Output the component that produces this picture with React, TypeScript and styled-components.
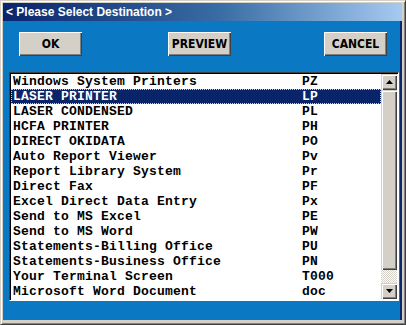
import React from "react";
import styled, { createGlobalStyle } from "styled-components";

const GlobalStyle = createGlobalStyle`
  html, body { margin: 0; padding: 0; background: #ffffff; }
  * { box-sizing: border-box; }
`;

const Window = styled.div`
  width: 406px;
  height: 325px;
  background: #d4d0c8;
  border-top: 1px solid #d4d0c8;
  border-left: 1px solid #d4d0c8;
  border-right: 1px solid #404040;
  border-bottom: 1px solid #404040;
  box-shadow: inset 1px 1px 0 #ffffff, inset -1px -1px 0 #808080;
  padding: 2px 3px 4px 2px;
  display: flex;
  flex-direction: column;
`;

const TitleBar = styled.div`
  height: 18px;
  flex: none;
  background: linear-gradient(to right, #0a246a 0%, #3a6ea5 55%, #a6caf0 100%);
  color: #ffffff;
  font-family: "Liberation Sans", Arial, sans-serif;
  font-weight: bold;
  font-size: 12px;
  line-height: 18px;
  padding-left: 3px;
  white-space: nowrap;
`;

const Body = styled.div`
  flex: 1;
  background: #0a78c2;
  border-right: 2px solid #0a2a6a;
  display: flex;
  flex-direction: column;
  padding: 11px 0 0 6px;
`;

const ButtonRow = styled.div`
  display: flex;
  padding-left: 10px;
  height: 24px;
`;

const Button = styled.button<{ $offset: number }>`
  margin-left: ${(p) => p.$offset}px;
  width: 63px;
  height: 24px;
  flex: none;
  padding: 0;
  background: #d4d0c8;
  border: none;
  box-shadow: inset 1px 1px 0 #ffffff, inset -1px -1px 0 #404040,
    inset -2px -2px 0 #808080;
  font-family: "DejaVu Sans Condensed", "Liberation Sans", sans-serif;
  font-weight: bold;
  font-size: 12px;
  color: #000000;
  cursor: default;
`;

const ListBox = styled.div`
  margin-top: 16px;
  width: 390px;
  height: 229px;
  background: #ffffff;
  border-top: 1px solid #404040;
  border-left: 1px solid #404040;
  border-right: 1px solid #ffffff;
  border-bottom: 1px solid #ffffff;
  box-shadow: inset 1px 1px 0 #000000;
  display: flex;
  padding: 1px;
`;

const Rows = styled.div`
  flex: 1;
`;

const Row = styled.div<{ $selected?: boolean }>`
  height: 15px;
  display: flex;
  align-items: center;
  padding-left: 2px;
  font-family: "Liberation Mono", "DejaVu Sans Mono", monospace;
  font-weight: bold;
  font-size: 13px;
  letter-spacing: 0.2px;
  white-space: nowrap;
  color: ${(p) => (p.$selected ? "#ffffff" : "#000000")};
  background: ${(p) => (p.$selected ? "#0a246a" : "transparent")};
  outline: ${(p) => (p.$selected ? "1px dotted #d4d0c8" : "none")};
  outline-offset: -1px;
`;

const Name = styled.span`
  width: 289px;
  flex: none;
`;

const Code = styled.span`
  flex: none;
`;

const ScrollBar = styled.div`
  width: 16px;
  flex: none;
  display: flex;
  flex-direction: column;
  background-color: #ffffff;
  background-image: repeating-conic-gradient(#d4d0c8 0 25%, #ffffff 0 50%);
  background-size: 2px 2px;
`;

const ScrollButton = styled.div`
  width: 16px;
  height: 16px;
  flex: none;
  background: #d4d0c8;
  box-shadow: inset 1px 1px 0 #d4d0c8, inset 2px 2px 0 #ffffff,
    inset -1px -1px 0 #404040, inset -2px -2px 0 #808080;
  display: flex;
  align-items: center;
  justify-content: center;
`;

const Thumb = styled.div`
  height: 180px;
  flex: none;
  background: #d4d0c8;
  box-shadow: inset 1px 1px 0 #d4d0c8, inset 2px 2px 0 #ffffff,
    inset -1px -1px 0 #404040, inset -2px -2px 0 #808080;
`;

const Track = styled.div`
  flex: 1;
`;

const Arrow = ({ down }: { down?: boolean }) => (
  <svg width="7" height="4" viewBox="0 0 7 4">
    {down ? (
      <polygon points="0,0 7,0 3.5,4" fill="#000" />
    ) : (
      <polygon points="0,4 7,4 3.5,0" fill="#000" />
    )}
  </svg>
);

const items: [string, string][] = [
  ["Windows System Printers", "PZ"],
  ["LASER PRINTER", "LP"],
  ["LASER CONDENSED", "PL"],
  ["HCFA PRINTER", "PH"],
  ["DIRECT OKIDATA", "PO"],
  ["Auto Report Viewer", "Pv"],
  ["Report Library System", "Pr"],
  ["Direct Fax", "PF"],
  ["Excel Direct Data Entry", "Px"],
  ["Send to MS Excel", "PE"],
  ["Send to MS Word", "PW"],
  ["Statements-Billing Office", "PU"],
  ["Statements-Business Office", "PN"],
  ["Your Terminal Screen", "T000"],
  ["Microsoft Word Document", "doc"],
];

export default function App() {
  return (
    <>
      <GlobalStyle />
      <Window>
        <TitleBar>&lt; Please Select Destination &gt;</TitleBar>
        <Body>
          <ButtonRow>
            <Button $offset={0}>OK</Button>
            <Button $offset={86}>PREVIEW</Button>
            <Button $offset={93}>CANCEL</Button>
          </ButtonRow>
          <ListBox>
            <Rows>
              {items.map(([n, c], i) => (
                <Row key={n} $selected={i === 1}>
                  <Name>{n}</Name>
                  <Code>{c}</Code>
                </Row>
              ))}
            </Rows>
            <ScrollBar>
              <ScrollButton>
                <Arrow />
              </ScrollButton>
              <Thumb />
              <Track />
              <ScrollButton>
                <Arrow down />
              </ScrollButton>
            </ScrollBar>
          </ListBox>
        </Body>
      </Window>
    </>
  );
}
